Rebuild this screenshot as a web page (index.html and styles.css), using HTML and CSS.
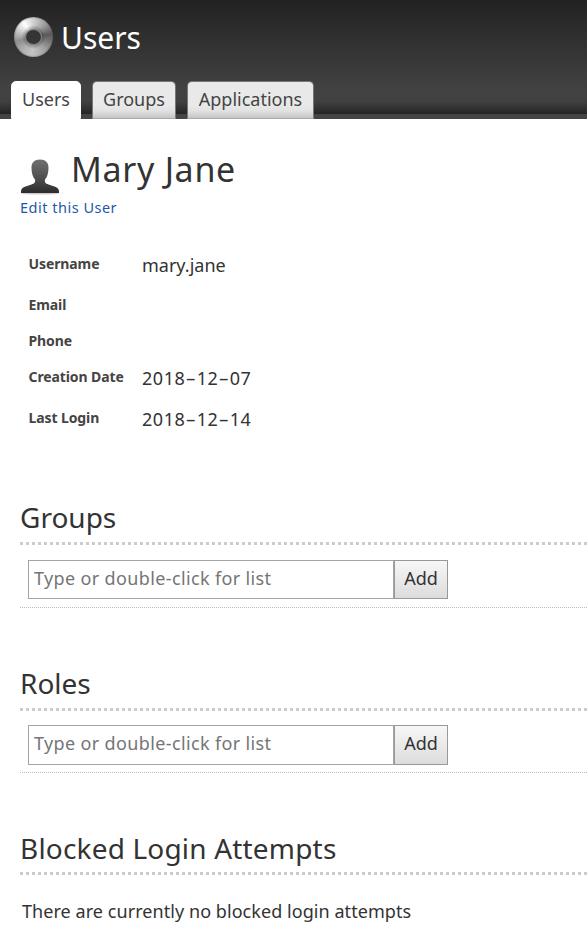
FILE: index.html
```html
<!DOCTYPE html>
<html lang="en">
<head>
<meta charset="utf-8">
<title>Users</title>
<link rel="stylesheet" href="styles.css">
</head>
<body>
<header class="header">
  <div class="brand">
    <span class="logo"><span class="logo-hole"></span></span>
    <h1 class="app-title">Users</h1>
  </div>
  <nav class="tabs">
    <a class="tab tab-users active">Users</a>
    <a class="tab tab-groups">Groups</a>
    <a class="tab tab-apps">Applications</a>
  </nav>
</header>
<main class="content">
  <div class="profile">
    <svg class="avatar" viewBox="0 0 40 38" width="40" height="38">
      <defs>
        <linearGradient id="body" x1="0" y1="0" x2="0" y2="1">
          <stop offset="0" stop-color="#707070"/>
          <stop offset=".6" stop-color="#4c4c4c"/>
          <stop offset="1" stop-color="#2c2c2c"/>
        </linearGradient>
      </defs>
      <ellipse cx="20" cy="34.500" rx="18.500" ry="1" fill="#ccc"/>
      <path fill="url(#body)" d="M20 .5C14.500 .5 11.300 3.500 11.500 9C11.600 14 12.500 17.500 15 20.500C15.500 23.500 14.500 24.500 11.500 25.500C5 27.500 1 28.500 1 32.500V34H39V32.500C39 28.500 35 27.500 28.500 25.500C25.500 24.500 24.500 23.500 25 20.500C27.500 17.500 28.400 14 28.500 9C28.700 3.500 25.500 .5 20 .5Z"/>
    </svg>
    <h2 class="name">Mary Jane</h2>
  </div>
  <a class="edit">Edit this User</a>
  <dl class="details">
    <dt>Username</dt><dd>mary.jane</dd>
    <dt>Email</dt><dd></dd>
    <dt>Phone</dt><dd></dd>
    <dt>Creation Date</dt><dd class="date">2018<span class="dash">-</span>12<span class="dash">-</span>07</dd>
    <dt>Last Login</dt><dd class="date">2018<span class="dash">-</span>12<span class="dash">-</span>14</dd>
  </dl>
  <section class="groups">
    <h3 class="heading">Groups</h3>
    <div class="picker">
      <input class="field" type="text" placeholder="Type or double-click for list"><button class="add">Add</button>
    </div>
  </section>
  <section class="roles">
    <h3 class="heading">Roles</h3>
    <div class="picker">
      <input class="field" type="text" placeholder="Type or double-click for list"><button class="add">Add</button>
    </div>
  </section>
  <section class="blocked">
    <h3 class="heading">Blocked Login Attempts</h3>
    <p class="message">There are currently no blocked login attempts</p>
  </section>
</main>
</body>
</html>
```
FILE: styles.css
```css
* { box-sizing: border-box; margin: 0; padding: 0; }
body {
  height: 928px;
  overflow: hidden;
  background: #fff;
  color: #333;
  font-family: "Noto Sans", "Open Sans", sans-serif;
  font-size: 18px;
}
h1, h2, h3 { font-weight: 400; }
.header {
  height: 119px;
  background: linear-gradient(#222 0, #424242 90px, #414141 101px, #252525 114px, #444 114px, #444 119px);
}
.brand { display: flex; height: 81px; padding: 17px 0 0 14px; }
.logo {
  width: 39px;
  height: 40px;
  padding: 12px 11px;
  border-radius: 50%;
  background:
    radial-gradient(circle, rgba(50, 50, 50, .35) 8px, transparent 12px),
    conic-gradient(from 0deg, #d0d0d0 0deg, #a0a0a0 40deg, #5a5a5a 80deg, #777 105deg, #a5a5a5 140deg, #c4c4c4 185deg, #b0b0b0 220deg, #909090 255deg, #b8b8b8 280deg, #fff 325deg, #d0d0d0 360deg);
  box-shadow: inset 0 0 2px #555;
}
.logo-hole { display: block; width: 17px; height: 16px; border: 1px solid #858585; border-radius: 50%; background: #353535; }
.app-title { margin-left: 8px; height: 40px; line-height: 41px; font-size: 30px; color: #fff; }
.tabs { display: flex; gap: 11px; padding-left: 11px; }
.tab {
  height: 38px;
  border: 1px solid #777;
  border-bottom-color: #aaa;
  border-radius: 5px 5px 0 0;
  background: linear-gradient(#e9e9e9 65%, #e2e2e2 80%, #c4c4c4);
  color: #444;
  text-align: center;
  line-height: 35px;
}
.active { border-color: #fff; background: #fff; }
.tab-users { width: 70px; }
.tab-groups { width: 84px; }
.tab-apps { width: 127px; }
.content { padding-left: 20px; }
.profile { display: flex; height: 79px; padding-top: 30px; }
.avatar { margin-top: 10px; }
.name { margin-left: 11px; height: 40px; line-height: 41px; font-size: 34px; letter-spacing: .7px; white-space: nowrap; }
.edit { display: block; height: 20px; line-height: 19px; font-size: 14.5px; letter-spacing: .5px; color: #1d5aab; }
.details {
  display: grid;
  grid-template-columns: 114px 1fr;
  grid-template-rows: 41px 36px 36px 41px 41px;
  margin: 36px 0 0 8px;
  height: 238px;
}
.details dt { padding-left: .5px; line-height: 19px; font-size: 14px; letter-spacing: -.1px; font-weight: 700; color: #444; white-space: nowrap; }
.details dd { line-height: 22px; }
.date { letter-spacing: .55px; }
.dash { display: inline-block; width: 11.3px; text-align: center; letter-spacing: 0; transform: scaleX(1.8); }
.heading { height: 50px; line-height: 50px; font-size: 28px; white-space: nowrap; }
.heading::after { content: ""; display: block; height: 3px; background: repeating-linear-gradient(90deg, #ccc 0 3px, transparent 3px 6px); }
.groups { height: 166px; }
.roles { height: 164px; }
.picker {
  display: flex;
  height: 66px;
  padding: 18px 0 0 8px;
  background: repeating-linear-gradient(90deg, #bbb 0 1px, transparent 1px 2px) 0 100% / 100% 1px no-repeat;
}
.field { width: 366px; height: 39px; border: 1px solid #a5a5a5; padding: 0 5px 3px; font: inherit; letter-spacing: .36px; }
.field::placeholder { color: #757575; opacity: 1; }
.add { width: 54px; height: 39px; padding-bottom: 3px; border: 1px solid #999; background: linear-gradient(#f7f7f7, #dcdcdc); font: inherit; color: #333; }
.roles .picker { height: 65px; padding-top: 17px; }
.roles .field, .roles .add { height: 40px; padding-bottom: 4px; }
.blocked .heading { line-height: 52px; letter-spacing: .18px; }
.blocked .heading::after { margin-top: -2px; }
.message { margin: 19px 0 0 2px; line-height: 40px; letter-spacing: .06px; white-space: nowrap; }
```
